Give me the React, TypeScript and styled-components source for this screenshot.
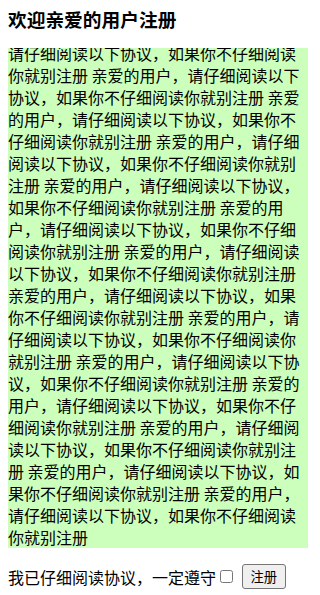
import styled, { createGlobalStyle } from "styled-components";

// #region styled
const GlobalStyle = createGlobalStyle`
  body {
    margin: 8px;
    background: #fff;
    color: #000;
    font-family: "Noto Sans CJK SC", "Noto Sans", sans-serif;
    font-size: 16px;
  }
`;

const Title = styled.h3`
  margin: 0 0 19px;

  font-size: 18.72px;
  font-weight: bold;
  line-height: 21px;
`;

const Agreement = styled.div`
  width: 300px;
  height: 500px;

  display: flex;
  flex-direction: column;
  justify-content: flex-end;

  background-color: #ccffbb;
  line-height: 22px;

  overflow: hidden;
`;

const Confirm = styled.p`
  margin: 16px 0 0;

  display: flex;
  align-items: center;

  line-height: 24px;
`;

const Check = styled.input`
  width: 13px;
  height: 13px;
  margin: 0 3px 0 4px;
`;

const Submit = styled.button`
  margin-left: 6px;
  padding: 2px 7.5px;

  font-family: "Noto Sans CJK SC", sans-serif;
  font-size: 13.33px;
  line-height: 19px;

  background-color: #efefef;
  border: 1px solid #767676;
  border-radius: 3px;
`;
// #endregion styled

const unit = "亲爱的用户，请仔细阅读以下协议，如果你不仔细阅读你就别注册";
const text = Array.from({ length: 20 }, () => unit).join(" ");

export default function App() {
  return (
    <>
      <GlobalStyle />
      <Title>欢迎亲爱的用户注册</Title>
      <Agreement>
        <div>{text}</div>
      </Agreement>
      <Confirm>
        我已仔细阅读协议，一定遵守
        <Check type="checkbox" />
        <Submit type="button">注册</Submit>
      </Confirm>
    </>
  );
}
